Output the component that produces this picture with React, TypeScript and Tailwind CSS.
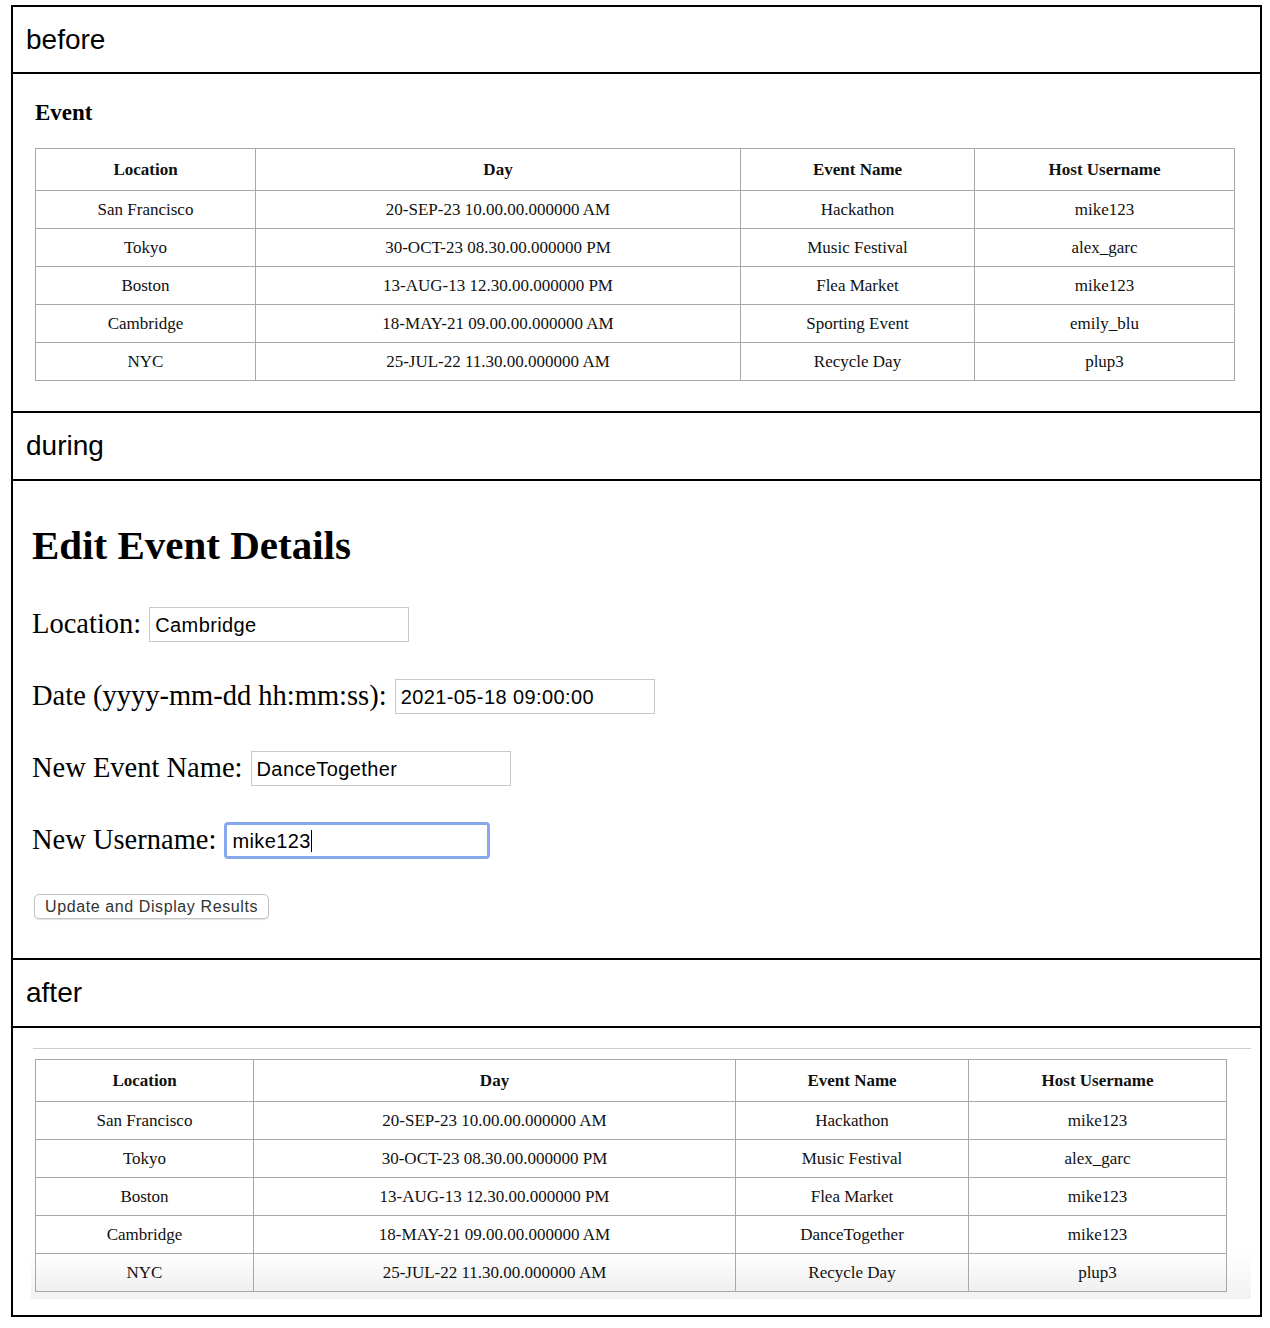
import React from "react";

type Row = { location: string; day: string; name: string; host: string };

const before: Row[] = [
  { location: "San Francisco", day: "20-SEP-23 10.00.00.000000 AM", name: "Hackathon", host: "mike123" },
  { location: "Tokyo", day: "30-OCT-23 08.30.00.000000 PM", name: "Music Festival", host: "alex_garc" },
  { location: "Boston", day: "13-AUG-13 12.30.00.000000 PM", name: "Flea Market", host: "mike123" },
  { location: "Cambridge", day: "18-MAY-21 09.00.00.000000 AM", name: "Sporting Event", host: "emily_blu" },
  { location: "NYC", day: "25-JUL-22 11.30.00.000000 AM", name: "Recycle Day", host: "plup3" },
];

const after: Row[] = before.map((r) =>
  r.location === "Cambridge" ? { ...r, name: "DanceTogether", host: "mike123" } : r
);

const serif = "font-['Liberation_Serif',_'Times_New_Roman',serif]";
const sans = "font-['Liberation_Sans',Arial,sans-serif]";

const StepHeader = ({ label, first }: { label: string; first?: boolean }) => (
  <div className={`${first ? "h-[67px]" : "h-[68px]"} flex items-center pl-[13px] border-b-2 border-black`}>
    <span className={`${sans} text-[28px] text-black`}>{label}</span>
  </div>
);

const EventTable = ({ rows, widths, fade }: { rows: Row[]; widths: number[]; fade?: boolean }) => (
  <table className={`${serif} border-collapse table-fixed text-[17px] text-[#111]`}>
    <colgroup>
      {widths.map((w, i) => (
        <col key={i} style={{ width: w }} />
      ))}
    </colgroup>
    <thead>
      <tr>
        {["Location", "Day", "Event Name", "Host Username"].map((h) => (
          <th key={h} className="h-[42px] border border-[#a8a8a8] font-bold text-center align-middle">
            {h}
          </th>
        ))}
      </tr>
    </thead>
    <tbody>
      {rows.map((r, i) => (
        <tr
          key={i}
          className={fade && i === rows.length - 1 ? "bg-gradient-to-b from-white to-[#efefef]" : ""}
        >
          {[r.location, r.day, r.name, r.host].map((c, j) => (
            <td key={j} className="h-[38px] border border-[#a8a8a8] text-center align-middle">
              {c}
            </td>
          ))}
        </tr>
      ))}
    </tbody>
  </table>
);

const Field = ({ label, value, focused }: { label: string; value: string; focused?: boolean }) => (
  <div className="flex items-center gap-[8px] h-[37px]">
    <span className={`${serif} text-[28.5px] text-black`}>{label}</span>
    {focused ? (
      <div className="w-[266px] h-[37px] border-[3px] border-[#86a9ee] rounded-[4px] bg-white flex items-center pl-[5px]">
        <span className={`${sans} text-[20px] tracking-[0.4px] text-black`}>{value}</span>
        <span className="w-px h-[22px] bg-black" />
      </div>
    ) : (
      <div className="w-[260px] h-[35px] border border-[#c9c9c9] bg-white flex items-center pl-[5px]">
        <span className={`${sans} text-[20px] tracking-[0.4px] text-black`}>{value}</span>
      </div>
    )}
  </div>
);

export default function App() {
  return (
    <div className="min-h-[1328px] bg-white pt-[5px] pl-[11px]">
      <div className="w-[1251px] border-2 border-black">
        <StepHeader label="before" first />
        <section className="h-[339px] pl-[22px] pt-[26px] border-b-2 border-black">
          <h3 className={`${serif} text-[23px] font-bold text-black leading-[26px] mb-[22px]`}>Event</h3>
          <EventTable rows={before} widths={[220, 485, 234, 260]} />
        </section>

        <StepHeader label="during" />
        <section className="h-[479px] pl-[19px] pt-[41px] border-b-2 border-black">
          <h1 className={`${serif} text-[41px] font-bold text-black leading-[46px] mb-[38px]`}>
            Edit Event Details
          </h1>
          <div className="flex flex-col gap-[35px]">
            <Field label="Location:" value="Cambridge" />
            <Field label="Date (yyyy-mm-dd hh:mm:ss):" value="2021-05-18 09:00:00" />
            <Field label="New Event Name:" value="DanceTogether" />
            <Field label="New Username:" value="mike123" focused />
          </div>
          <button
            className={`${sans} mt-[35px] ml-[2px] h-[25px] px-[10px] rounded-[5px] border border-[#c4c4c4] bg-white shadow-[0_1px_1px_rgba(0,0,0,0.12)] text-[16px] tracking-[0.6px] text-[#333] leading-none`}
          >
            Update and Display Results
          </button>
        </section>

        <StepHeader label="after" />
        <section className="h-[287px] pl-[18px] pt-[20px]">
          <div className="w-[1220px] pb-[7px] bg-[linear-gradient(to_bottom,white_80%,#f2f2f2)]">
            <div className="h-px bg-[#cfcfcf] ml-[2px] mb-[10px]" />
            <div className="pl-[4px]">
              <EventTable rows={after} widths={[218, 482, 233, 258]} fade />
            </div>
          </div>
        </section>
      </div>
    </div>
  );
}
